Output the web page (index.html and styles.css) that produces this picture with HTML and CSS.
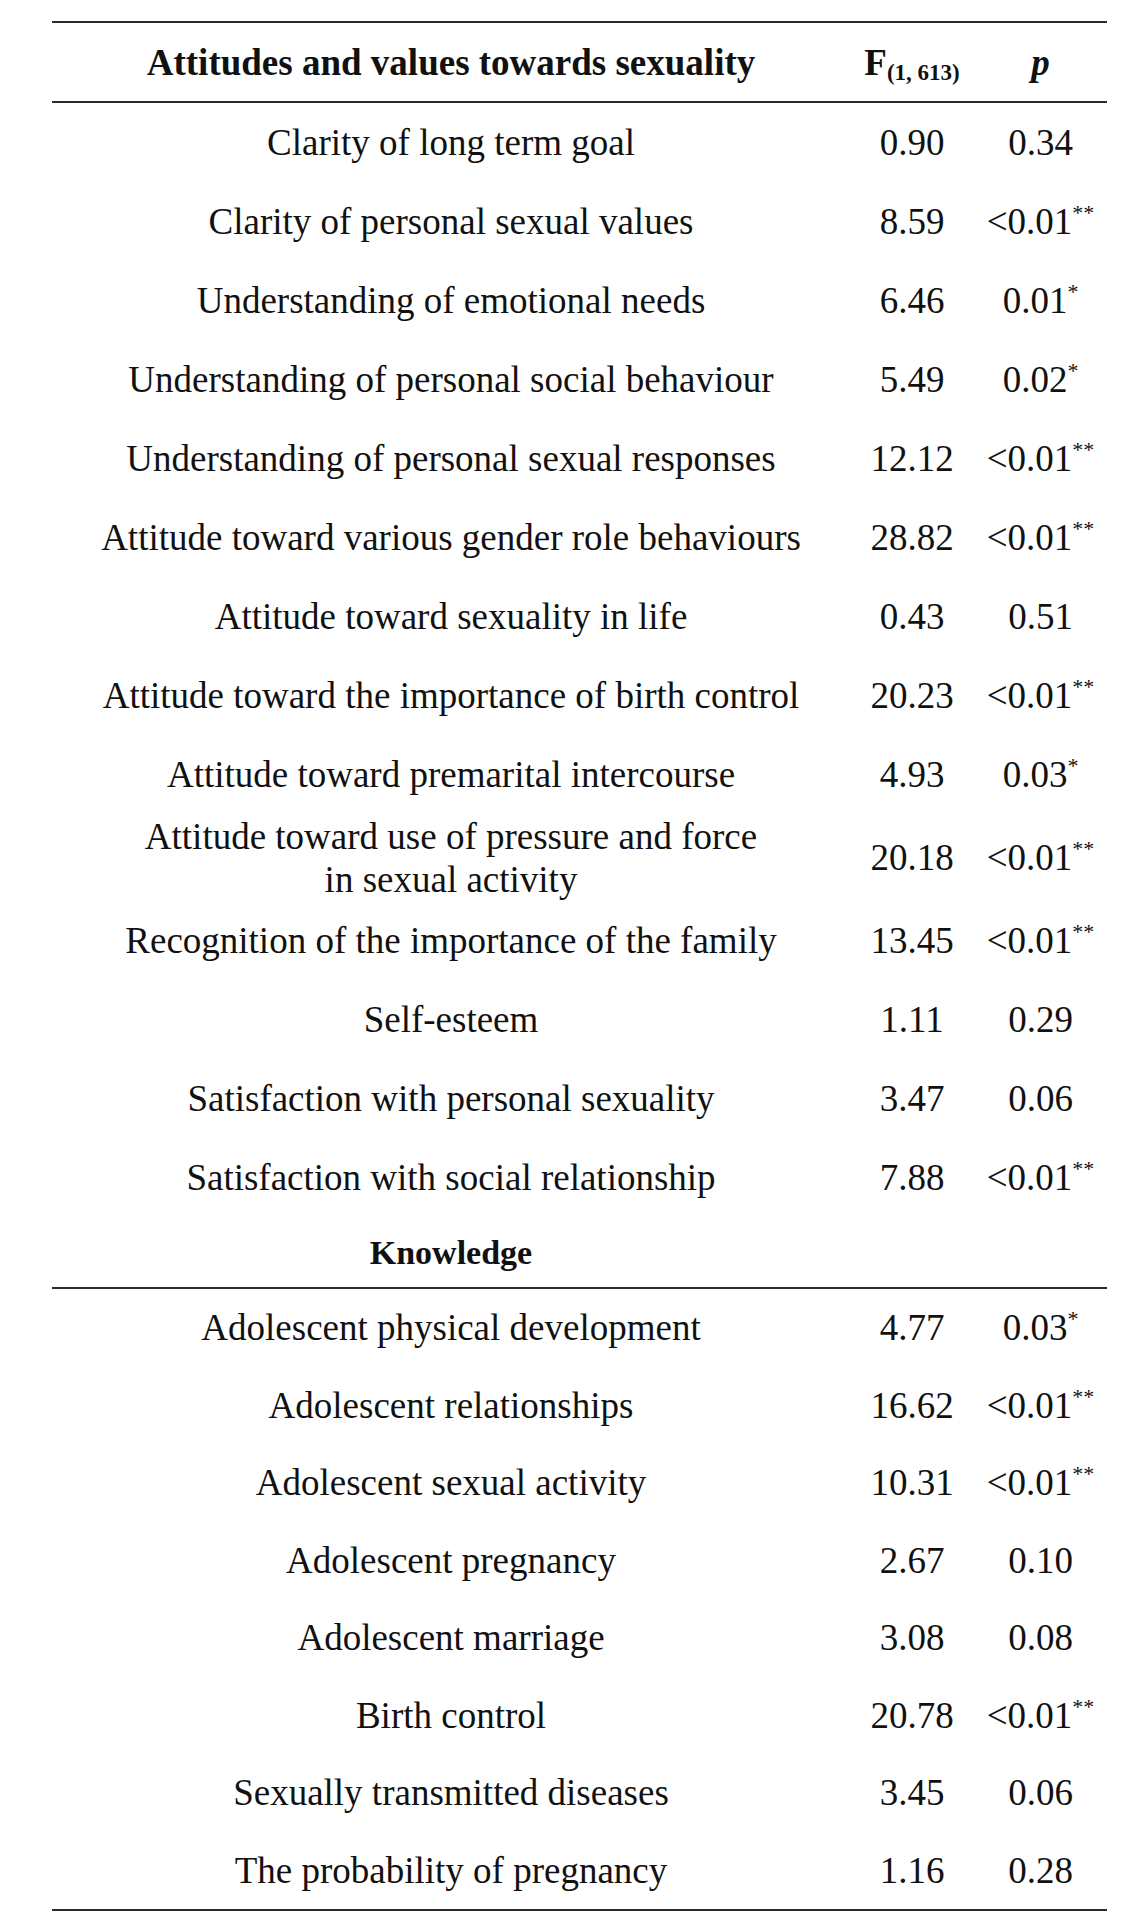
FILE: index.html
```html
<!DOCTYPE html>
<html lang="en">
<head>
<meta charset="utf-8">
<title>Attitudes and values towards sexuality</title>
<link rel="stylesheet" href="styles.css">
</head>
<body>
<div class="table">
  <div class="row head">
    <div class="cell">Attitudes and values towards sexuality</div>
    <div class="cell">F<sub>(1, 613)</sub></div>
    <div class="cell"><i>p</i></div>
  </div>

  <div class="group g1">
    <div class="row"><div class="cell">Clarity of long term goal</div><div class="cell">0.90</div><div class="cell">0.34</div></div>
    <div class="row"><div class="cell">Clarity of personal sexual values</div><div class="cell">8.59</div><div class="cell">&lt;0.01<sup>**</sup></div></div>
    <div class="row"><div class="cell">Understanding of emotional needs</div><div class="cell">6.46</div><div class="cell">0.01<sup>*</sup></div></div>
    <div class="row"><div class="cell">Understanding of personal social behaviour</div><div class="cell">5.49</div><div class="cell">0.02<sup>*</sup></div></div>
    <div class="row"><div class="cell">Understanding of personal sexual responses</div><div class="cell">12.12</div><div class="cell">&lt;0.01<sup>**</sup></div></div>
    <div class="row"><div class="cell">Attitude toward various gender role behaviours</div><div class="cell">28.82</div><div class="cell">&lt;0.01<sup>**</sup></div></div>
    <div class="row"><div class="cell">Attitude toward sexuality in life</div><div class="cell">0.43</div><div class="cell">0.51</div></div>
    <div class="row"><div class="cell">Attitude toward the importance of birth control</div><div class="cell">20.23</div><div class="cell">&lt;0.01<sup>**</sup></div></div>
    <div class="row"><div class="cell">Attitude toward premarital intercourse</div><div class="cell">4.93</div><div class="cell">0.03<sup>*</sup></div></div>
    <div class="row tall"><div class="cell">Attitude toward use of pressure and force<br>in sexual activity</div><div class="cell">20.18</div><div class="cell">&lt;0.01<sup>**</sup></div></div>
    <div class="row"><div class="cell">Recognition of the importance of the family</div><div class="cell">13.45</div><div class="cell">&lt;0.01<sup>**</sup></div></div>
    <div class="row"><div class="cell">Self-esteem</div><div class="cell">1.11</div><div class="cell">0.29</div></div>
    <div class="row"><div class="cell">Satisfaction with personal sexuality</div><div class="cell">3.47</div><div class="cell">0.06</div></div>
    <div class="row"><div class="cell">Satisfaction with social relationship</div><div class="cell">7.88</div><div class="cell">&lt;0.01<sup>**</sup></div></div>
  </div>

  <div class="row section">
    <div class="cell">Knowledge</div>
    <div class="cell"></div>
    <div class="cell"></div>
  </div>

  <div class="group g2">
    <div class="row"><div class="cell">Adolescent physical development</div><div class="cell">4.77</div><div class="cell">0.03<sup>*</sup></div></div>
    <div class="row"><div class="cell">Adolescent relationships</div><div class="cell">16.62</div><div class="cell">&lt;0.01<sup>**</sup></div></div>
    <div class="row"><div class="cell">Adolescent sexual activity</div><div class="cell">10.31</div><div class="cell">&lt;0.01<sup>**</sup></div></div>
    <div class="row"><div class="cell">Adolescent pregnancy</div><div class="cell">2.67</div><div class="cell">0.10</div></div>
    <div class="row"><div class="cell">Adolescent marriage</div><div class="cell">3.08</div><div class="cell">0.08</div></div>
    <div class="row"><div class="cell">Birth control</div><div class="cell">20.78</div><div class="cell">&lt;0.01<sup>**</sup></div></div>
    <div class="row"><div class="cell">Sexually transmitted diseases</div><div class="cell">3.45</div><div class="cell">0.06</div></div>
    <div class="row"><div class="cell">The probability of pregnancy</div><div class="cell">1.16</div><div class="cell">0.28</div></div>
  </div>
</div>
</body>
</html>
```

FILE: styles.css
```css
html, body {
  margin: 0;
  padding: 0;
  background: #ffffff;
}

body {
  font-family: "Palatino Linotype", "Book Antiqua", "Liberation Serif", serif;
  color: #111111;
}

.table {
  width: 1055px;
  margin: 21px 0 0 52px;
  border-top: 2px solid #2b2b2b;
  border-bottom: 2px solid #2b2b2b;
}

.row {
  display: grid;
  grid-template-columns: 798px 124px 133px;
  align-items: center;
  height: 79px;
  font-size: 37px;
  line-height: 43px;
}

.cell {
  text-align: center;
  white-space: nowrap;
}

.head {
  height: 78px;
  font-family: "Liberation Serif", serif;
  font-weight: bold;
  border-bottom: 2px solid #2b2b2b;
}

.head sub {
  font-size: 23px;
  vertical-align: -5px;
  line-height: 0;
}

.head i {
  font-weight: bold;
}

.g1 .row {
  height: 79px;
}

.g1 .row.tall {
  height: 87px;
}

.section {
  height: 70px;
  font-family: "Liberation Serif", serif;
  font-weight: bold;
  font-size: 34px;
  border-bottom: 2px solid #2b2b2b;
}

.g2 .row {
  height: 77.5px;
}

sup {
  font-size: 22px;
  line-height: 0;
  vertical-align: 14px;
}
```
